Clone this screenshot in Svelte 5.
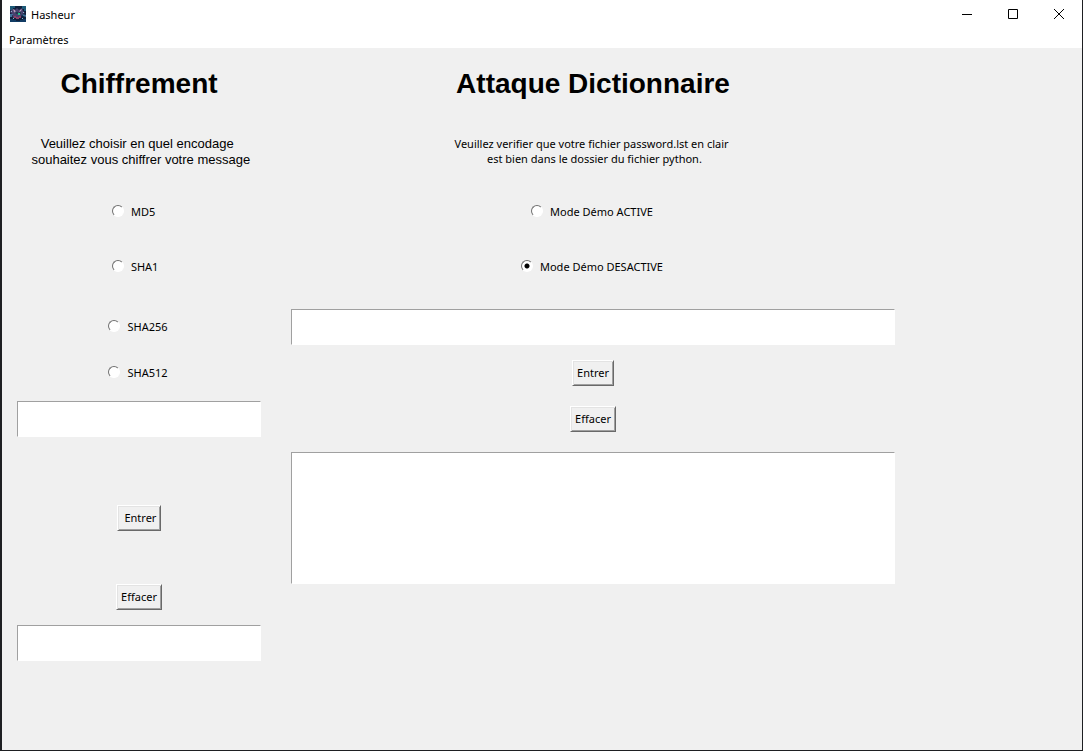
<script>
  let hash = $state('');
  let demo = $state('off');
  let message = $state('');
  let result = $state('');
  let target = $state('');
  let log = $state('');
</script>

<div class="desktop">
  <div class="window">
    <header class="titlebar">
      <svg class="logo" width="16" height="16" viewBox="0 0 16 16" aria-hidden="true">
        <rect width="16" height="16" fill="#10203c" />
        <path d="M0 0h5v2H3v2H0zM12 0h4v5h-2V3h-2z" fill="#1d5a78" />
        <path d="M2 3l3 1 2-2 2 2 3-2 1 3 2 2-3 1-1 3-3 1-3-1-2 1-1-4-2-2z" fill="#4b416f" />
        <path d="M3 3l2 1 1 3-2-1zM12 3l-1 2-2 1 1-2z" fill="#b79cbc" />
        <path d="M0 8h3v1H2v2H0zM12 8l4 1v2l-3-1z" fill="#41709a" />
        <path d="M5 6h3v2H6zM9 6h2v2H9z" fill="#203b50" />
        <rect x="8" y="7" width="2" height="2" fill="#22c28a" />
        <path d="M4 10h2v1h3v-1h2v2H9v1H6v-1H4z" fill="#8c4268" />
        <path d="M0 13h3v1h3v1h4v-1h3v-1h3v3H0z" fill="#123c64" />
        <path d="M1 5h1v1H1zM13 6h1v1h-1zM3 12h1v1H3zM12 12h1v1h-1z" fill="#8ab4cf" />
      </svg>
      <span class="name">Hasheur</span>
      <button class="caption" aria-label="Réduire">
        <svg width="10" height="10" viewBox="0 0 10 10"><path d="M0 5.5h10" stroke="#000" /></svg>
      </button>
      <button class="caption" aria-label="Agrandir">
        <svg width="10" height="10" viewBox="0 0 10 10"><path d="M.5.5h9v9h-9z" fill="none" stroke="#000" /></svg>
      </button>
      <button class="caption" aria-label="Fermer">
        <svg width="10" height="10" viewBox="0 0 10 10"><path d="M0 0l10 10M10 0L0 10" stroke="#000" /></svg>
      </button>
    </header>
    <nav class="menubar"><button class="menu">Paramètres</button></nav>

    <main class="form">
      <h1 class="left">Chiffrement</h1>
      <h1 class="right">Attaque Dictionnaire</h1>

      <p class="left intro">Veuillez choisir en quel encodage&nbsp;<br />&nbsp;souhaitez vous chiffrer votre message</p>
      <p class="right note">Veuillez verifier que votre fichier password.lst en clair&nbsp;<br />&nbsp;est bien dans le dossier du fichier python.</p>

      <label class="left radio"><input type="radio" name="hash" value="md5" bind:group={hash} /><span>MD5&nbsp;&nbsp;&nbsp;</span></label>
      <label class="right radio"><input type="radio" name="demo" value="on" bind:group={demo} /><span>Mode Démo ACTIVE</span></label>

      <label class="left radio"><input type="radio" name="hash" value="sha1" bind:group={hash} /><span>SHA1&nbsp;&nbsp;</span></label>
      <label class="right radio"><input type="radio" name="demo" value="off" bind:group={demo} /><span>Mode Démo DESACTIVE</span></label>

      <label class="left radio"><input type="radio" name="hash" value="sha256" bind:group={hash} /><span>SHA256</span></label>
      <input class="right field" aria-label="Mot de passe chiffré" bind:value={target} />

      <label class="left radio"><input type="radio" name="hash" value="sha512" bind:group={hash} /><span>SHA512</span></label>
      <button class="right push">Entrer</button>

      <input class="left field" aria-label="Message à chiffrer" bind:value={message} />
      <button class="right push" onclick={() => { target = ''; log = ''; }}>Effacer</button>

      <button class="left push">&nbsp;Entrer</button>
      <textarea class="right output" aria-label="Résultat de l'attaque" bind:value={log}></textarea>

      <button class="left push" onclick={() => { message = ''; result = ''; }}>Effacer</button>
      <input class="left field" aria-label="Message chiffré" bind:value={result} />
    </main>
  </div>
</div>

<style>
  .desktop {
    box-sizing: border-box;
    display: flex;
    min-height: 100vh;
    padding: 0 1px 1px 2px;
    background: #1e1f22;
    color: #000;
    font: 11px/15px "Noto Sans", "Open Sans", sans-serif;
  }
  .window {
    flex: 1;
    min-width: 0;
    background: #f0f0f0;
  }
  .titlebar {
    display: flex;
    align-items: center;
    height: 28px;
    padding-left: 8px;
    background: #fff;
  }
  .name {
    flex: 1;
    margin-left: 5px;
  }
  button {
    font: inherit;
    color: inherit;
  }
  .caption {
    display: flex;
    align-items: center;
    justify-content: center;
    width: 46px;
    height: 28px;
    padding: 0;
    border: 0;
    background: none;
  }
  .menubar {
    display: flex;
    height: 20px;
    background: #fff;
  }
  .menu {
    padding: 4px 7px 1px;
    border: 0;
    background: none;
  }
  .form {
    display: grid;
    grid-template-columns: 274fr 634fr 172fr;
    align-items: center;
    justify-items: center;
  }
  .left {
    grid-column: 1;
  }
  .right {
    grid-column: 2;
  }
  h1 {
    margin: 0;
    padding: 20px 0 18px;
    font: bold 28px/32px "Liberation Sans", Arial, sans-serif;
  }
  p {
    margin: 0;
    padding: 18px 0 16px;
    text-align: center;
  }
  .note {
    padding: 16px 0;
  }
  .intro {
    font: 13px/16px "Liberation Sans", Arial, sans-serif;
  }
  .radio {
    display: flex;
    align-items: center;
    gap: 7px;
    padding: 20px 2px 20px 0;
  }
  .radio input {
    appearance: none;
    box-sizing: border-box;
    width: 12px;
    height: 12px;
    margin: 0 0 2px;
    border: 1px solid;
    border-color: #707070 #fff #fff #707070;
    border-radius: 50%;
    background: #fff;
  }
  .radio input:checked {
    background: radial-gradient(circle, #000 2px, #fff 3px);
  }
  .radio:nth-of-type(n + 5) {
    padding: 0 2px 1px 0;
  }
  .field,
  .output {
    box-sizing: border-box;
    justify-self: stretch;
    margin: 15px;
    border: 1px solid;
    border-color: #a0a0a0 #fff #fff #a0a0a0;
    background: #fff;
    font: inherit;
    outline: 0;
  }
  .field {
    height: 36px;
    min-width: 0;
  }
  .output {
    height: 132px;
    margin: 0 15px;
    resize: none;
  }
  .push {
    height: 26px;
    padding: 0 4px 2px;
    border: 1px solid;
    border-color: #fff #696969 #696969 #fff;
    background: #f0f0f0;
    box-shadow: inset 1px 1px #e3e3e3, inset -1px -1px #a0a0a0;
  }
</style>
